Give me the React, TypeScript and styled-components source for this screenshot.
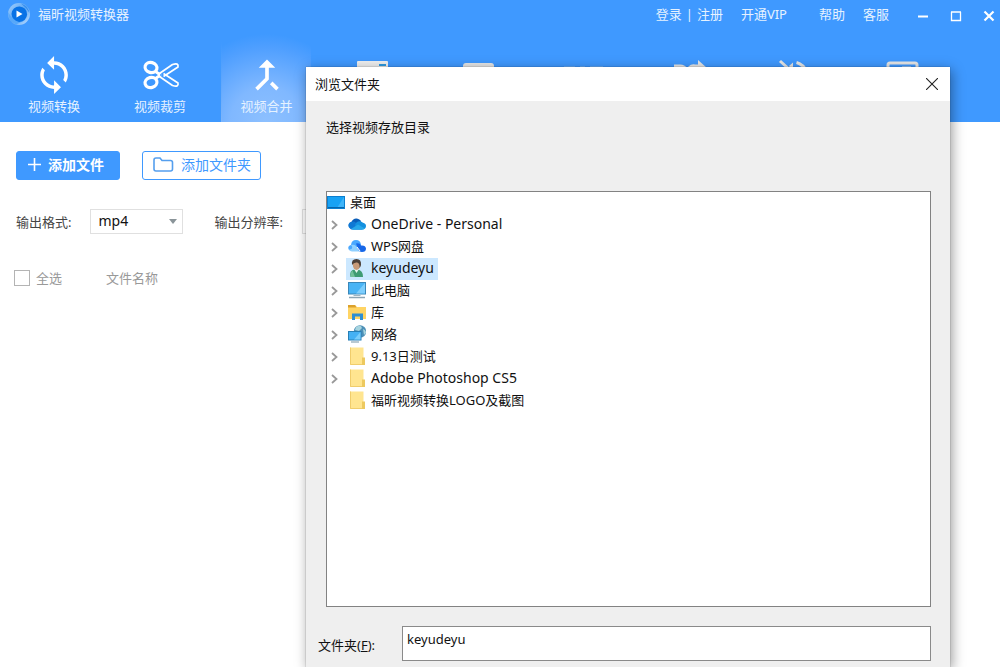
import React from "react";
import styled, { createGlobalStyle, css } from "styled-components";

const GlobalStyle = createGlobalStyle`
  * { box-sizing: border-box; }
  html, body { margin: 0; height: 100%; overflow: hidden; }
  body, button, input, select {
    font-family: "Noto Sans", "Noto Sans CJK SC", sans-serif;
    font-size: 13px;
    line-height: 18px;
  }
  #root { height: 100%; }
  button { border: 0; padding: 0; background: none; color: inherit; cursor: pointer; }
  svg { display: block; flex: none; }
`;

const AppWindow = styled.div`
  position: relative;
  min-height: 100vh;
  overflow: hidden;
  background: #fff;
`;

const Header = styled.header`
  background: #3f99ff;
  color: #fff;
`;

const TitleBar = styled.div`
  display: flex;
  align-items: center;
  height: 34px;
  padding: 0 5px 6px 7px;
`;

const AppTitle = styled.h1`
  margin: 0 auto 0 7px;
  font-size: 13px;
  font-weight: 400;
  color: #e6f2ff;
`;

const TopLinks = styled.nav`
  display: flex;
  align-items: center;
  gap: 18px;
  margin-right: 28px;
`;

const LinkPair = styled.span`
  display: flex;
  gap: 4px;
  color: #e6f2ff;
`;

const TopLink = styled.a<{ $spaced?: boolean }>`
  color: #e6f2ff;
  text-decoration: none;
  margin-right: ${(p) => (p.$spaced ? "14px" : "0")};
`;

const WindowButtons = styled.div`
  display: flex;
  gap: 21px;
  padding-top: 4px;
`;

const WindowButton = styled.button`
  width: 12px;
  height: 12px;
`;

const Toolbar = styled.nav`
  display: flex;
  gap: 16px;
  height: 88px;
  padding-left: 9px;
`;

const Tab = styled.button<{ $active?: boolean }>`
  display: flex;
  flex: none;
  flex-direction: column;
  align-items: center;
  width: 90px;
  padding-top: 19px;
  color: #e6f2ff;
  ${(p) =>
    p.$active &&
    css`
      background: radial-gradient(ellipse 90px 88px at 50% 100%, #8dc0ff 0%, #80b8ff 40%, #4f9fff 85%, #3f99ff 100%);
      border-left: 1px solid;
      border-image: linear-gradient(#3f99ff 10%, #7fb6fa) 1;
    `}
`;

const Content = styled.main`
  padding: 29px 16px;
`;

const Actions = styled.div`
  display: flex;
  gap: 22px;
`;

const ActionButton = styled.button<{ $primary?: boolean }>`
  display: flex;
  align-items: center;
  gap: ${(p) => (p.$primary ? "6px" : "7px")};
  height: 29px;
  padding: 0 ${(p) => (p.$primary ? "15px" : "9px")} 2px 10px;
  border: 1px solid #3f99ff;
  border-radius: 3px;
  background: ${(p) => (p.$primary ? "#3f99ff" : "#fff")};
  color: ${(p) => (p.$primary ? "#fff" : "#3f99ff")};
  font-size: 14px;
  font-weight: ${(p) => (p.$primary ? 700 : 400)};
`;

const Options = styled.div`
  display: flex;
  gap: 31px;
  margin-top: 29px;
`;

const Field = styled.label`
  display: flex;
  align-items: center;
  gap: 19px;
  color: #444;
  white-space: nowrap;
`;

const SelectBox = styled.span`
  display: flex;
  align-items: center;
  width: 93px;
  height: 25px;
  border: 1px solid #e0e0e0;
  padding-right: 5px;
`;

const Select = styled.select`
  flex: 1;
  min-width: 0;
  height: 22px;
  border: 0;
  padding: 0 7px 2px;
  background: transparent;
  appearance: none;
  color: #111;
  font-size: 14px;
`;

const ListHead = styled.div`
  display: flex;
  gap: 44px;
  margin-top: 35px;
  color: #999;
`;

const CheckLabel = styled.label`
  display: flex;
  align-items: center;
  gap: 6px;
  margin-left: -2px;
`;

const CheckBox = styled.input`
  appearance: none;
  width: 16px;
  height: 16px;
  margin: 0;
  border: 1px solid #b4b4b4;
  background: #fff;
`;

const Dialog = styled.section`
  position: absolute;
  inset: 67px 50px 0 306px;
  display: flex;
  flex-direction: column;
  background: #efefef;
  box-shadow: 0 0 1px rgba(0, 0, 0, 0.45), 2px 3px 12px rgba(0, 0, 0, 0.4);
  color: #111;
`;

const DialogTitleBar = styled.header`
  display: flex;
  align-items: center;
  justify-content: space-between;
  height: 34px;
  padding: 0 12px 0 9px;
  background: #fff;
`;

const DialogTitle = styled.h2`
  margin: 0;
  font-size: 13px;
  font-weight: 400;
`;

const DialogBody = styled.div`
  display: flex;
  flex: 1;
  flex-direction: column;
  padding: 17px 19px 6px 20px;
`;

const Prompt = styled.p`
  margin: 0 0 55px;
`;

const Tree = styled.ul`
  flex: 1;
  margin: 0;
  padding: 0;
  border: 1px solid #828282;
  background: #fff;
  list-style: none;
`;

const TreeRow = styled.li`
  display: flex;
  height: 22px;
`;

const Expander = styled.button`
  width: 19px;
  padding-left: 4px;
`;

const ExpanderSpace = styled.span`
  width: 19px;
`;

const TreeItem = styled.button<{ $root?: boolean; $selected?: boolean; $latin?: boolean }>`
  display: flex;
  align-items: center;
  gap: 5px;
  padding: 0 4px 2px ${(p) => (p.$root ? "0" : "2px")};
  background: ${(p) => (p.$selected ? "#cce8ff" : "transparent")};
  font-size: ${(p) => (p.$latin ? "14px" : "13px")};
`;

const FolderField = styled.div`
  display: flex;
  align-items: center;
  gap: 27px;
  margin: 19px 0 0 -8px;
`;

const FolderLabel = styled.label`
  padding-top: 2px;
`;

const FolderInput = styled.input`
  flex: 1;
  min-width: 0;
  height: 35px;
  border: 1px solid #8a8a8a;
  padding: 0 4px 10px;
  background: #fff;
  color: #111;
`;

const AppLogo = () => (
  <svg width="24" height="24" viewBox="0 0 24 24">
    <defs>
      <linearGradient id="ring" x1="0" y1="0" x2="1" y2="1">
        <stop offset="0" stopColor="#a9d2fb" />
        <stop offset="0.5" stopColor="#5aa6f5" />
        <stop offset="1" stopColor="#c2dfff" />
      </linearGradient>
    </defs>
    <circle cx="12" cy="12" r="11" fill="url(#ring)" />
    <path d="M1 10Q5 18 14 20l-5 2.500Q1 19 1 10z" fill="#57a8fa" />
    <path d="M14 1.500Q21 4 22.500 11Q19 5 14 1.500z" fill="#2f8bee" />
    <path d="M4.500 12A7.800 7.800 0 1 1 12 20Q5 18 4.500 12z" fill="#0872e6" />
    <path d="M9.500 8.500l6 3.500-6 3.500z" fill="#fff" />
  </svg>
);

const TabIcon = ({ children }: { children: React.ReactNode }) => (
  <svg width="44" height="44" viewBox="0 0 44 44" fill="none" stroke="none">
    {children}
  </svg>
);

const SyncIcon = () => (
  <TabIcon>
    <path
      transform="translate(1.300 1.300) scale(1.730)"
      fill="#fff"
      d="M12 4V1L8 5l4 4V6c3.310 0 6 2.690 6 6 0 1.010-.250 1.970-.700 2.800l1.460 1.460C19.540 15.030 20 13.570 20 12c0-4.420-3.580-8-8-8zm0 14c-3.310 0-6-2.690-6-6 0-1.010.250-1.970.700-2.800L5.240 7.740C4.460 8.970 4 10.430 4 12c0 4.420 3.580 8 8 8v3l4-4-4-4v3z"
    />
  </TabIcon>
);

const ScissorsIcon = () => (
  <TabIcon>
    <g stroke="#fff" strokeLinejoin="round">
      <ellipse cx="13" cy="14.500" rx="6" ry="5" strokeWidth="3.200" transform="rotate(15 13 14.500)" />
      <ellipse cx="13" cy="29.500" rx="6" ry="5" strokeWidth="3.200" transform="rotate(-15 13 29.500)" />
      <path d="M20 21.500L34.500 11.500Q41 9.500 40 14L25.500 23.500" strokeWidth="1.700" />
      <path d="M20 22.500L34.500 32.500Q41 34.500 40 30L25.500 20.500" strokeWidth="1.700" />
      <path d="M17.500 18.500l5 3.500-5 3.500" strokeWidth="2.800" />
    </g>
    <circle cx="23" cy="22" r="1" fill="#3f99ff" />
  </TabIcon>
);

const MergeIcon = () => (
  <TabIcon>
    <path
      transform="scale(1.833)"
      fill="#fff"
      d="M17 20.410L18.410 19 15 15.590 13.590 17 17 20.410zM7.500 8H11v5.590L5.590 19 7 20.410l6-6V8h3.500L12 3.500 7.500 8z"
    />
  </TabIcon>
);

const PanelIcon = () => (
  <TabIcon>
    <rect x="7" y="8" width="31" height="28" rx="1" fill="#f0f0f0" />
    <rect x="29" y="11" width="7" height="2" fill="#2f9be0" />
  </TabIcon>
);

const CardIcon = () => (
  <TabIcon>
    <rect x="7" y="10" width="31" height="26" rx="3" fill="#e6e6e6" />
  </TabIcon>
);

const GifIcon = () => (
  <TabIcon>
    <path d="M2 14h11M18 14h5M28 14h13" stroke="#8dbff5" strokeWidth="1" />
  </TabIcon>
);

const ShuffleIcon = () => (
  <TabIcon>
    <path d="M6 13.500h6q4 0 7 4t7 7h8" stroke="#e6e6e6" strokeWidth="4" />
    <path d="M6 28h6q4 0 7-8t8-6.500h6" stroke="#e6e6e6" strokeWidth="4" />
    <path d="M30 7l9 8-9 8z" fill="#e6e6e6" />
  </TabIcon>
);

const MuteIcon = () => (
  <TabIcon>
    <path d="M6 8l29 26M22.500 9.500q7 2 10 9" stroke="#e6e6e6" strokeWidth="3" />
    <path d="M15 13l4-3.500v9z" fill="#e6e6e6" />
  </TabIcon>
);

const PictureIcon = () => (
  <TabIcon>
    <rect x="8" y="10" width="29" height="24" rx="2" stroke="#e6e6e6" strokeWidth="3" />
    <path d="M22 13.500h9v10h-3v-8h-6z" fill="#e6e6e6" />
  </TabIcon>
);

const TABS = [
  { name: "视频转换", Icon: SyncIcon, shown: true },
  { name: "视频裁剪", Icon: ScissorsIcon, shown: true },
  { name: "视频合并", Icon: MergeIcon, shown: true, active: true },
  { name: "panel", Icon: PanelIcon },
  { name: "card", Icon: CardIcon },
  { name: "gif", Icon: GifIcon },
  { name: "shuffle", Icon: ShuffleIcon },
  { name: "mute", Icon: MuteIcon },
  { name: "picture", Icon: PictureIcon },
];

const TreeIcon = ({ children }: { children: React.ReactNode }) => (
  <svg width="18" height="18" viewBox="0 0 18 18">
    {children}
  </svg>
);

const DesktopIcon = () => (
  <TreeIcon>
    <rect x="0.500" y="3.500" width="17" height="12" fill="#18a2f4" stroke="#0b7fd0" />
    <path d="M10 15L17 4v11z" fill="#3eb5fa" />
    <path d="M1 14.500h16" stroke="#0765ab" />
  </TreeIcon>
);

const OneDriveIcon = () => (
  <TreeIcon>
    <path d="M4 14a3.800 3.800 0 0 1-.500-7.300A5.500 5.500 0 0 1 13 6l-2 6z" fill="#0a5db8" />
    <path d="M2 13.500A3.700 3.700 0 0 1 4 6.700q2-.500 4 1l7 5.300-1 1.500H4q-1.200 0-2-1z" fill="#0f78d4" />
    <path d="M7 10q1.500-4.500 6-3.500l2 1.300Q18 8.500 18 11t-3 3.500H4q6-1 3-4.500z" fill="#1490df" />
    <path d="M3 14l7-4.500 6.800 4Q16 14.500 14.500 14.500H4z" fill="#28a8ea" />
  </TreeIcon>
);

const WpsCloudIcon = () => (
  <TreeIcon>
    <path d="M2 13.500Q-.500 12 .600 9.500 1.500 8 3 8 3.500 3 8 3q4.500 0 5 5l-3 3z" fill="#4aa8ff" />
    <path d="M3 8q3-1 5 1l4 5.500H4q-2 0-3-2 4 0 3-3z" fill="#8fd0ff" />
    <path d="M8 6.500q4-1 5 2 4.500-.500 5 3 0 3.500-4 3.500-3 0-4-3z" fill="#1767e8" />
    <path d="M9 10l3 4" stroke="#fff" strokeWidth="1" />
  </TreeIcon>
);

const UserIcon = () => (
  <TreeIcon>
    <path d="M2.500 18q-1.500-7 4-7.500h3q5.500.500 5.500 7.500z" fill="#3f9b73" />
    <path d="M3 18q-1-5 1.500-6.500L7 18z" fill="#73c09a" />
    <path d="M6 10l2.500 4L11 10z" fill="#e9f5ee" />
    <ellipse cx="8.500" cy="6" rx="3.600" ry="5" fill="#c79a78" />
    <path d="M4 6Q3 0 8.500 0 13.500 0 13 6q-.500 2-1.500 3Q12 4 9 3.500T4 6z" fill="#4c4038" />
  </TreeIcon>
);

const ComputerIcon = () => (
  <TreeIcon>
    <rect x="0.500" y="1.500" width="17" height="11.500" fill="#4ab4f5" stroke="#3b87b8" />
    <path d="M8 12.500L17 2v10.500z" fill="#7dcdfc" />
    <path d="M6 14h6l1 1H5z" fill="#9db4c2" />
    <path d="M1 16.500h16" stroke="#8da5b4" strokeWidth="1.500" />
  </TreeIcon>
);

const LibraryIcon = () => (
  <TreeIcon>
    <path d="M0 2h7l2 2h9v12H0z" fill="#ffd464" />
    <path d="M0 2h7l1.500 2.500H0z" fill="#dba12c" />
    <path d="M4 17v-6.500h11V17h-3v-3.500H7V17z" fill="#2f8fd3" />
  </TreeIcon>
);

const NetworkIcon = () => (
  <TreeIcon>
    <circle cx="12" cy="6.500" r="6.200" fill="#4d8fb6" />
    <path d="M8 2q5-3 6 1l-3 3-4-1zM15 4q3 1 3 4l-2 2z" fill="#a6d4df" />
    <rect x="0.500" y="6.500" width="12.500" height="8.500" fill="#45b1f4" stroke="#287fb5" />
    <path d="M6 14.500L12.500 7v7.500z" fill="#79cdfb" />
    <path d="M3 17h8" stroke="#8aa5b4" strokeWidth="1.200" />
  </TreeIcon>
);

const FolderIcon = () => (
  <TreeIcon>
    <path d="M2 0.500h13.500V18H2z" fill="#ffe590" />
    <path d="M2.500 0.500v17H15" stroke="#f0cd6c" fill="none" />
    <path d="M14 10.500h3V18h-3z" fill="#edc95f" />
  </TreeIcon>
);

const TREE = [
  { label: "桌面", Icon: DesktopIcon, root: true },
  { label: "OneDrive - Personal", Icon: OneDriveIcon, expandable: true, latin: true },
  { label: "WPS网盘", Icon: WpsCloudIcon, expandable: true },
  { label: "keyudeyu", Icon: UserIcon, expandable: true, selected: true, latin: true },
  { label: "此电脑", Icon: ComputerIcon, expandable: true },
  { label: "库", Icon: LibraryIcon, expandable: true },
  { label: "网络", Icon: NetworkIcon, expandable: true },
  { label: "9.13日测试", Icon: FolderIcon, expandable: true },
  { label: "Adobe Photoshop CS5", Icon: FolderIcon, expandable: true, latin: true },
  { label: "福昕视频转换LOGO及截图", Icon: FolderIcon },
];

const Caret = () => (
  <svg width="8" height="5" viewBox="0 0 8 5">
    <path d="M0 0h8L4 5z" fill="#8a9499" />
  </svg>
);

export default function App() {
  return (
    <>
      <GlobalStyle />
      <AppWindow>
        <Header>
          <TitleBar>
            <AppLogo />
            <AppTitle>福昕视频转换器</AppTitle>
            <TopLinks>
              <LinkPair>
                <TopLink href="#login">登录</TopLink>|<TopLink href="#register">注册</TopLink>
              </LinkPair>
              <TopLink href="#vip" $spaced>开通VIP</TopLink>
              <TopLink href="#help">帮助</TopLink>
              <TopLink href="#service">客服</TopLink>
            </TopLinks>
            <WindowButtons>
              <WindowButton aria-label="最小化">
                <svg width="12" height="12"><path d="M1 6.500h10" stroke="#fff" strokeWidth="2" /></svg>
              </WindowButton>
              <WindowButton aria-label="最大化">
                <svg width="12" height="12" fill="none">
                  <path d="M1.500 2v8.500h9V2M1 2h10" stroke="#fff" strokeWidth="1.300" />
                </svg>
              </WindowButton>
              <WindowButton aria-label="关闭">
                <svg width="12" height="12"><path d="M1.500 1.500l9 9M10.500 1.500l-9 9" stroke="#fff" strokeWidth="2.200" /></svg>
              </WindowButton>
            </WindowButtons>
          </TitleBar>
          <Toolbar>
            {TABS.map(({ name, Icon, shown, active }) => (
              <Tab key={name} $active={active} aria-label={name}>
                <Icon />
                {shown && <span>{name}</span>}
              </Tab>
            ))}
          </Toolbar>
        </Header>

        <Content>
          <Actions>
            <ActionButton $primary>
              <svg width="15" height="15"><path d="M7.500 1v13M1 7.500h13" stroke="#fff" strokeWidth="1.600" /></svg>
              添加文件
            </ActionButton>
            <ActionButton>
              <svg width="21" height="15" fill="none">
                <path d="M1 3q0-2 2-2h4l2 2.500h8.500q2 0 2 2V12q0 2-2 2H3q-2 0-2-2z" stroke="#559fee" strokeWidth="1.600" />
              </svg>
              添加文件夹
            </ActionButton>
          </Actions>
          <Options>
            <Field>
              输出格式:
              <SelectBox>
                <Select defaultValue="mp4"><option>mp4</option></Select>
                <Caret />
              </SelectBox>
            </Field>
            <Field>
              输出分辨率:
              <SelectBox>
                <Select defaultValue=""><option value="" /></Select>
                <Caret />
              </SelectBox>
            </Field>
          </Options>
          <ListHead>
            <CheckLabel><CheckBox type="checkbox" />全选</CheckLabel>
            <span>文件名称</span>
          </ListHead>
        </Content>

        <Dialog role="dialog" aria-labelledby="dialog-title">
          <DialogTitleBar>
            <DialogTitle id="dialog-title">浏览文件夹</DialogTitle>
            <WindowButton aria-label="关闭">
              <svg width="12" height="12"><path d="M0 0l12 12M12 0L0 12" stroke="#222" strokeWidth="1.100" /></svg>
            </WindowButton>
          </DialogTitleBar>
          <DialogBody>
            <Prompt>选择视频存放目录</Prompt>
            <Tree>
              {TREE.map(({ label, Icon, root, expandable, selected, latin }) => (
                <TreeRow key={label}>
                  {expandable && (
                    <Expander aria-label={`展开 ${label}`}>
                      <svg width="7" height="10" fill="none"><path d="M1 1l4.500 4L1 9" stroke="#999" strokeWidth="1.800" /></svg>
                    </Expander>
                  )}
                  {!expandable && !root && <ExpanderSpace />}
                  <TreeItem $root={root} $selected={selected} $latin={latin}>
                    <Icon />
                    {label}
                  </TreeItem>
                </TreeRow>
              ))}
            </Tree>
            <FolderField>
              <FolderLabel htmlFor="folder">文件夹(<u>F</u>):</FolderLabel>
              <FolderInput id="folder" defaultValue="keyudeyu" />
            </FolderField>
          </DialogBody>
        </Dialog>
      </AppWindow>
    </>
  );
}
